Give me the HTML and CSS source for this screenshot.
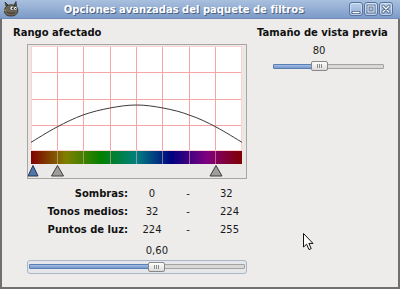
FILE: index.html
```html
<!DOCTYPE html>
<html lang="es">

<head>
    <meta charset="UTF-8">
    <title>Opciones avanzadas del paquete de filtros</title>
    <link rel="stylesheet" href="styles.css">
</head>

<body>
    <div class="window">
        <div class="titlebar">
            <svg class="app_icon" width="16" height="16" viewBox="0 0 16 16">
                <path d="M3 5 L2 1 L5 4 Z M11 4 L13 0.5 L13.5 5 Z" fill="#5f5a4c" stroke="#2b271f" stroke-width="0.7"/>
                <path d="M1.5 10 C1.5 6 4 3.8 8 3.8 C12 3.8 14.8 6 14.8 9.5 C14.8 13 12 15 8 15 C4 15 1.5 13.5 1.5 10 Z" fill="#6d6656" stroke="#2b271f" stroke-width="0.8"/>
                <ellipse cx="9" cy="7.2" rx="2" ry="2.1" fill="#fff" stroke="#222" stroke-width="0.5"/>
                <ellipse cx="12.4" cy="7.4" rx="1.7" ry="1.9" fill="#fff" stroke="#222" stroke-width="0.5"/>
                <circle cx="9.5" cy="7.4" r="0.8" fill="#111"/>
                <circle cx="12.7" cy="7.6" r="0.7" fill="#111"/>
                <path d="M4 11 C6 12.5 9 12.8 12 11.5" fill="none" stroke="#2b271f" stroke-width="0.8"/>
                <path d="M3 9 L1 9.5" stroke="#b59a5a" stroke-width="1"/>
            </svg>
            <div class="title">Opciones avanzadas del paquete de filtros</div>
            <div class="wm_buttons">
                <span class="wm_btn">
                    <svg width="14" height="14" viewBox="0 0 14 14">
                        <path d="M4 10.5 H10" stroke="#3f5a82" stroke-width="3" stroke-linecap="round"/>
                        <path d="M4 10.5 H10" stroke="#fff" stroke-width="1.4" stroke-linecap="round"/>
                    </svg>
                </span>
                <span class="wm_btn">
                    <svg width="14" height="14" viewBox="0 0 14 14">
                        <rect x="4" y="4" width="6" height="6" fill="none" stroke="#3f5a82" stroke-width="2.6"/>
                        <rect x="4" y="4" width="6" height="6" fill="none" stroke="#fff" stroke-width="1.1"/>
                    </svg>
                </span>
                <span class="wm_btn">
                    <svg width="14" height="14" viewBox="0 0 14 14">
                        <path d="M4 4 L10 10 M10 4 L4 10" stroke="#3f5a82" stroke-width="3" stroke-linecap="round"/>
                        <path d="M4 4 L10 10 M10 4 L4 10" stroke="#fff" stroke-width="1.4" stroke-linecap="round"/>
                    </svg>
                </span>
            </div>
        </div>

        <div class="dialog">
            <div class="col_left">
                <h2 class="heading">Rango afectado</h2>

                <div class="curve_frame">
                    <svg width="218" height="133" viewBox="0 0 218 133">
                        <defs>
                            <linearGradient id="hue" x1="0" x2="1" y1="0" y2="0">
                                <stop offset="0" stop-color="#800000"/>
                                <stop offset="0.1667" stop-color="#808000"/>
                                <stop offset="0.3333" stop-color="#008000"/>
                                <stop offset="0.5" stop-color="#008080"/>
                                <stop offset="0.6667" stop-color="#000080"/>
                                <stop offset="0.8333" stop-color="#800080"/>
                                <stop offset="1" stop-color="#800000"/>
                            </linearGradient>
                        </defs>
                        <rect x="3" y="1" width="211" height="105" fill="#fff"/>
                        <rect x="3" y="106" width="211" height="13" fill="url(#hue)"/>
                        <g stroke="#f6a6a6" stroke-width="1">
                            <path d="M29.5 1 V106 M55.5 1 V106 M82.5 1 V106 M108.5 1 V106 M134.5 1 V106 M161.5 1 V106 M187.5 1 V106"/>
                            <path d="M3 27.5 H214 M3 54.5 H214 M3 80.5 H214"/>
                            <rect x="3.5" y="1.5" width="210" height="104" fill="none" stroke="#fbd2d2"/>
                        </g>
                        <g stroke="#f0b0b0" stroke-width="1" opacity="0.55">
                            <path d="M29.5 106 V119 M55.5 106 V119 M82.5 106 V119 M108.5 106 V119 M134.5 106 V119 M161.5 106 V119 M187.5 106 V119"/>
                        </g>
                        <path transform="translate(-1,-1)" fill="none" stroke="#3a3a3a" stroke-width="1"
                            d="M4 98.3 C8.33 95.75 21.33 87.55 30 83 C38.67 78.45 47.17 74.17 56 71 C64.83 67.83 74.08 65.67 83 64 C91.92 62.33 100.67 61 109.5 61 C118.33 61 127.08 62.33 136 64 C144.92 65.67 154.17 67.83 162 71 C171.83 74.17 180.33 78.45 189 83 C197.67 87.55 210.67 95.75 215 98.3"/>
                        <path d="M5 120.5 L10 131 L0 131 Z" fill="#4f76ad" stroke="#22324a" stroke-width="1" stroke-linejoin="round"/>
                        <path d="M29.5 120.5 L35.5 131 L23.5 131 Z" fill="#9d9d9d" stroke="#3c3c3c" stroke-width="1" stroke-linejoin="round"/>
                        <path d="M188 120.5 L194 131 L182 131 Z" fill="#9d9d9d" stroke="#3c3c3c" stroke-width="1" stroke-linejoin="round"/>
                    </svg>
                </div>

                <div class="ranges">
                    <span class="r_label">Sombras:</span><span class="r_low">0</span><span class="r_dash">-</span><span class="r_high">32</span>
                    <span class="r_label">Tonos medios:</span><span class="r_low">32</span><span class="r_dash">-</span><span class="r_high">224</span>
                    <span class="r_label">Puntos de luz:</span><span class="r_low">224</span><span class="r_dash">-</span><span class="r_high">255</span>
                </div>

                <div class="scale_box big" style="--pos: 0.6">
                    <div class="scale_value"><span>0,60</span></div>
                    <div class="scale">
                        <div class="track">
                            <div class="trough"></div>
                            <div class="fill"></div>
                            <div class="thumb"></div>
                        </div>
                    </div>
                </div>
            </div>

            <div class="col_right">
                <h2 class="heading">Tamaño de vista previa</h2>
                <div class="scale_box small" style="--pos: 0.4">
                    <div class="scale_value"><span>80</span></div>
                    <div class="scale">
                        <div class="track">
                            <div class="trough"></div>
                            <div class="fill"></div>
                            <div class="thumb"></div>
                        </div>
                    </div>
                </div>
            </div>
        </div>

        <svg class="cursor" width="12" height="18" viewBox="0 0 12 18">
            <path d="M0.5 0.5 L0.5 14 L3.6 11.2 L6 16.6 L8.2 15.6 L5.9 10.4 L10 10.4 Z" fill="#fff" stroke="#111" stroke-width="1" stroke-linejoin="round"/>
        </svg>
    </div>
</body>

</html>
```

FILE: styles.css
```css
* {
    box-sizing: border-box;
}

body {
    margin: 0;
    font-family: "DejaVu Sans", sans-serif;
    font-size: 10px;
    color: #1a1a1a;
    background: #edeceb;
}

.window {
    position: relative;
    width: 400px;
    height: 289px;
    display: flex;
    flex-direction: column;
}

/* Title bar */

.titlebar {
    height: 19px;
    display: flex;
    align-items: center;
    padding: 0 7px 0 3px;
    background: linear-gradient(#a9c0de, #7d9bc8);
    border-bottom: 1px solid #6f8cb8;
}

.app_icon {
    flex: none;
}

.title {
    flex: 1;
    text-align: center;
    color: #fff;
    font-weight: bold;
    font-size: 10px;
    text-shadow: 1px 1px 0 #4a5f84;
    white-space: nowrap;
}

.wm_buttons {
    display: flex;
    gap: 1px;
}

.wm_btn {
    width: 14px;
    height: 14px;
    border: 1px solid #56749f;
    border-radius: 3px;
    background: linear-gradient(#bcd0ea, #8eaad3);
    box-shadow: inset 0 0 0 1px rgba(255, 255, 255, 0.45);
    display: flex;
}

.wm_btn svg {
    margin: -1px;
}

/* Dialog body */

.dialog {
    flex: 1;
    border: 2px solid #707070;
    border-top: none;
    background: #edeceb;
    padding: 8px 0 0 11px;
    display: grid;
    grid-template-columns: 234px 1fr;
    column-gap: 10px;
    align-items: start;
}

.heading {
    margin: 0;
    font-size: 10px;
    font-weight: bold;
    line-height: 12px;
    color: #111;
}

.curve_frame {
    margin: 5px 0 0 14px;
    width: 220px;
    height: 135px;
    border: 1px solid #a7a6a3;
    background: #eae9e7;
}

.curve_frame svg {
    display: block;
}

.ranges {
    margin-top: 6px;
    display: grid;
    grid-template-columns: 115px 42px 36px auto;
    line-height: 18px;
}

.r_label {
    font-weight: bold;
    text-align: right;
    color: #111;
}

.r_low,
.r_dash {
    text-align: center;
}

.r_low {
    padding-left: 6px;
}

.r_high {
    padding-left: 14px;
}

/* Scales */

.scale_value {
    position: relative;
    height: 12px;
    line-height: 12px;
}

.scale_value span {
    position: absolute;
    top: 0;
    left: calc(var(--pos) * (100% - 17px) + 8.5px);
    transform: translateX(-50%);
}

.scale_box.big {
    margin: 6px 0 0 14px;
    width: 220px;
}

.scale_box.big .scale_value {
    margin: 0 2px;
}

.scale_box.big .scale {
    margin-top: 3px;
    height: 14px;
    border: 1px solid #a9b5c8;
    border-radius: 3px;
    background: #e6e7ea;
    padding: 0 1px;
}

.scale_box.small {
    margin: 6px 0 0 16px;
    width: 111px;
}

.scale_box.small .scale {
    margin-top: 4px;
}

.track {
    position: relative;
    height: 12px;
}

.small .track {
    height: 10px;
}

.trough {
    position: relative;
    top: 3px;
    height: 5px;
    border: 1px solid #a3a3a1;
    border-radius: 1px;
    background: #d9d8d6;
}

.fill {
    position: absolute;
    top: 3px;
    left: 0;
    height: 5px;
    width: calc(var(--pos) * (100% - 17px) + 4px);
    border: 1px solid #5b7fb3;
    border-radius: 1px;
    background: linear-gradient(#a3bfe6, #7398cd);
}

.thumb {
    position: absolute;
    top: 1px;
    left: calc(var(--pos) * (100% - 17px));
    width: 17px;
    height: 10px;
    border: 1px solid #888;
    border-radius: 2px;
    background: linear-gradient(#fdfdfd, #dcdbd9);
}

.small .thumb {
    top: 0;
}

.thumb::after {
    content: "";
    position: absolute;
    left: 5px;
    top: 2px;
    width: 5px;
    height: 4px;
    background: repeating-linear-gradient(90deg, #8a8a8a 0 1px, transparent 1px 2px);
}

.cursor {
    position: absolute;
    left: 303px;
    top: 233px;
}
```
